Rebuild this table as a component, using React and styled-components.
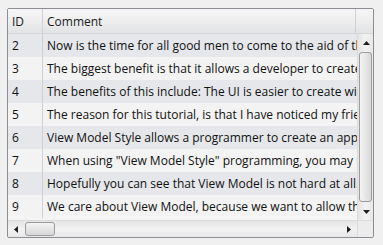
import React from 'react';
import styled, { createGlobalStyle } from 'styled-components';

const GlobalStyle = createGlobalStyle`
  html, body {
    margin: 0;
    padding: 0;
    background: #f0f0f0;
  }
  body {
    font-family: "Open Sans", "Liberation Sans", Arial, sans-serif;
    font-size: 12px;
    color: #111;
  }
`;

const rows = [
  { id: 2, comment: 'Now is the time for all good men to come to the aid of their country.' },
  { id: 3, comment: 'The biggest benefit is that it allows a developer to create unit tests.' },
  { id: 4, comment: 'The benefits of this include: The UI is easier to create with designers.' },
  { id: 5, comment: 'The reason for this tutorial, is that I have noticed my friends struggle.' },
  { id: 6, comment: 'View Model Style allows a programmer to create an application quickly.' },
  { id: 7, comment: 'When using "View Model Style" programming, you may need converters.' },
  { id: 8, comment: 'Hopefully you can see that View Model is not hard at all.' },
  { id: 9, comment: 'We care about View Model, because we want to allow the designer freedom.' },
];

function Arrow({ dir }) {
  const pts = {
    up: '0,4 3.5,0 7,4',
    down: '0,0 3.5,4 7,0',
    left: '4,0 0,3.5 4,7',
    right: '0,0 4,3.5 0,7',
  }[dir];
  const vertical = dir === 'up' || dir === 'down';
  return (
    <svg width={vertical ? 7 : 4} height={vertical ? 4 : 7} viewBox={vertical ? '0 0 7 4' : '0 0 4 7'}>
      <polygon points={pts} fill="#1e1e1e" />
    </svg>
  );
}

function App() {
  return (
    <>
      <GlobalStyle />
      <Page>
        <Grid>
          <Header>
            <HeadCell width="30px">ID</HeadCell>
            <HeadCell grow>Comment</HeadCell>
            <HeadFiller />
          </Header>
          <Body>
            <Viewport>
              {rows.map((r, i) => (
                <Row key={r.id} alt={i % 2 === 1}>
                  <IdCell>{r.id}</IdCell>
                  <CommentCell>{r.comment}</CommentCell>
                </Row>
              ))}
            </Viewport>
            <VScroll>
              <ScrollButton>
                <Arrow dir="up" />
              </ScrollButton>
              <VTrack>
                <VThumb />
              </VTrack>
              <ScrollButton>
                <Arrow dir="down" />
              </ScrollButton>
            </VScroll>
            <HScroll>
              <ScrollButton>
                <Arrow dir="left" />
              </ScrollButton>
              <HTrack>
                <HThumb />
              </HTrack>
              <ScrollButton>
                <Arrow dir="right" />
              </ScrollButton>
            </HScroll>
            <Corner />
          </Body>
        </Grid>
      </Page>
    </>
  );
}

export default App;

const Page = styled.div`
  padding: 8px 0 0 7px;
`;

const Grid = styled.div`
  width: 367px;
  height: 230px;
  box-sizing: border-box;
  border: 1px solid #8b8e94;
  border-radius: 2px;
  background: #f4f4f4;
  display: flex;
  flex-direction: column;
  overflow: hidden;
`;

const Header = styled.div`
  display: flex;
  height: 24px;
  flex: none;
  background: linear-gradient(#f6f6f6 0%, #efefef 45%, #e2e3e5 100%);
  border-bottom: 1px solid #d4d5d8;
`;

const HeadCell = styled.div`
  width: ${(p) => p.width || 'auto'};
  flex: ${(p) => (p.grow ? '1' : 'none')};
  padding-left: 4px;
  display: flex;
  align-items: center;
  border-right: 1px solid #d0d1d4;
  color: #1a1a1a;
`;

const HeadFiller = styled.div`
  width: 17px;
  flex: none;
`;

const Body = styled.div`
  flex: 1;
  display: grid;
  grid-template-columns: 1fr 16px;
  grid-template-rows: 1fr 17px;
  min-height: 0;
`;

const Viewport = styled.div`
  overflow: hidden;
  background: #f4f4f4;
`;

const Row = styled.div`
  display: flex;
  height: 23px;
  background: ${(p) => (p.alt ? '#f3f3f3' : '#e5e7ea')};
`;

const IdCell = styled.div`
  width: 30px;
  flex: none;
  padding-left: 4px;
  display: flex;
  align-items: center;
  border-right: 1px solid #cfd0d3;
`;

const CommentCell = styled.div`
  flex: 1;
  padding-left: 4px;
  display: flex;
  align-items: center;
  white-space: nowrap;
  overflow: hidden;
`;

const ScrollButton = styled.div`
  width: 16px;
  height: 17px;
  flex: none;
  display: flex;
  align-items: center;
  justify-content: center;
`;

const VScroll = styled.div`
  display: flex;
  flex-direction: column;
  background: linear-gradient(90deg, #e4e4e4, #f2f2f2 50%, #e8e8e8);
  border-left: 1px solid #dcdcdc;
`;

const VTrack = styled.div`
  flex: 1;
  display: flex;
  padding: 1px 0;
`;

const VThumb = styled.div`
  flex: 1;
  margin: 0 1px;
  border: 1px solid #9c9c9c;
  border-radius: 3px;
  background: linear-gradient(90deg, #f4f4f4, #e6e6e6 50%, #d8d8d8);
`;

const HScroll = styled.div`
  display: flex;
  background: linear-gradient(#e4e4e4, #f2f2f2 50%, #e8e8e8);
  border-top: 1px solid #dcdcdc;
`;

const HTrack = styled.div`
  flex: 1;
  display: flex;
  padding: 0 1px;
`;

const HThumb = styled.div`
  width: 28px;
  margin: 1px 0;
  border: 1px solid #9c9c9c;
  border-radius: 3px;
  background: linear-gradient(#f4f4f4, #e6e6e6 50%, #d8d8d8);
`;

const Corner = styled.div`
  background: #ececec;
  border-top: 1px solid #dcdcdc;
  border-left: 1px solid #dcdcdc;
`;
